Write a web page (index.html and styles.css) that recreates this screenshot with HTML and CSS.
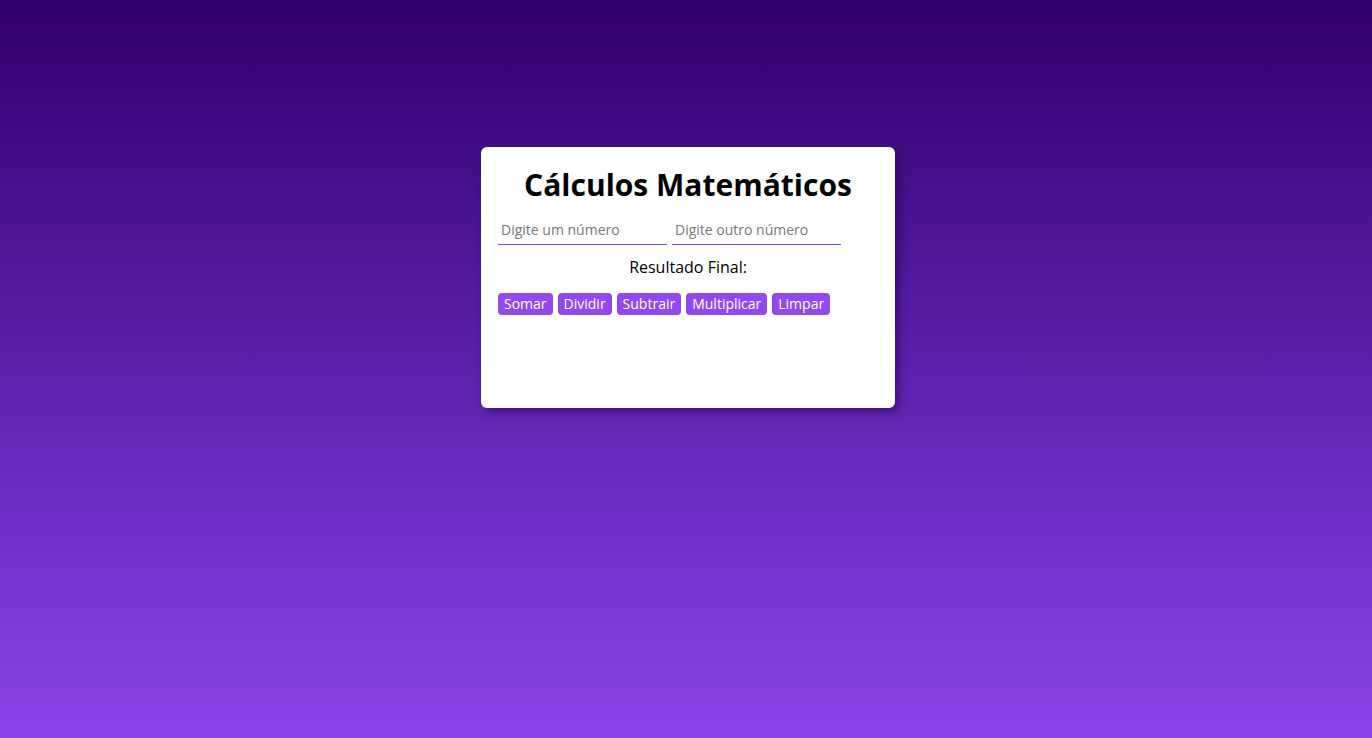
FILE: index.html
```html
<!DOCTYPE html>
<html lang="pt-BR">
<head>
<meta charset="utf-8">
<title>Cálculos Matemáticos</title>
<link rel="stylesheet" href="styles.css">
</head>
<body>
<main class="page">
  <section class="card">
    <h1 class="title">Cálculos Matemáticos</h1>
    <div class="inputs">
      <input class="field" type="text" placeholder="Digite um número">
      <input class="field" type="text" placeholder="Digite outro número">
    </div>
    <p class="result">Resultado Final:</p>
    <div class="buttons">
      <button class="btn">Somar</button>
      <button class="btn">Dividir</button>
      <button class="btn">Subtrair</button>
      <button class="btn">Multiplicar</button>
      <button class="btn">Limpar</button>
    </div>
  </section>
</main>
</body>
</html>
```

FILE: styles.css
```css
html, body {
  margin: 0;
  padding: 0;
  height: 100%;
}
body {
  background: linear-gradient(to bottom, #2e006c 0%, #8a43eb 100%);
  font-family: "Open Sans", "Noto Sans", sans-serif;
  color: #000;
}
.page {
  display: flex;
  justify-content: center;
  padding-top: 147px;
  padding-left: 4px;
  box-sizing: border-box;
  min-height: 100%;
}
.card {
  width: 414px;
  height: 261px;
  box-sizing: border-box;
  background: #fff;
  border-radius: 6px;
  box-shadow: 4px 4px 9px rgba(35, 0, 75, 0.55);
  padding: 17px 17px 0 17px;
}
.title {
  margin: 3px 0 0 0;
  text-align: center;
  font-size: 30px;
  font-weight: 700;
  line-height: 36px;
  letter-spacing: 0;
}
.inputs {
  display: flex;
  gap: 5px;
  margin-top: 12px;
}
.field {
  width: 169px;
  height: 30px;
  box-sizing: border-box;
  border: none;
  border-bottom: 1px solid #8a44ea;
  outline: none;
  padding: 0 3px;
  font-family: inherit;
  font-size: 14px;
  background: transparent;
}
.field::placeholder {
  color: #777;
}
.result {
  margin: 12px 0 0 0;
  text-align: center;
  font-size: 16px;
  line-height: 20px;
}
.buttons {
  display: flex;
  gap: 5px;
  margin-top: 16px;
}
.btn {
  height: 22px;
  padding: 0 6px;
  border: none;
  border-radius: 4px;
  background: #9148f0;
  color: #fff;
  font-family: inherit;
  font-size: 14px;
  font-weight: 500;
  line-height: 22px;
  cursor: pointer;
}
```
